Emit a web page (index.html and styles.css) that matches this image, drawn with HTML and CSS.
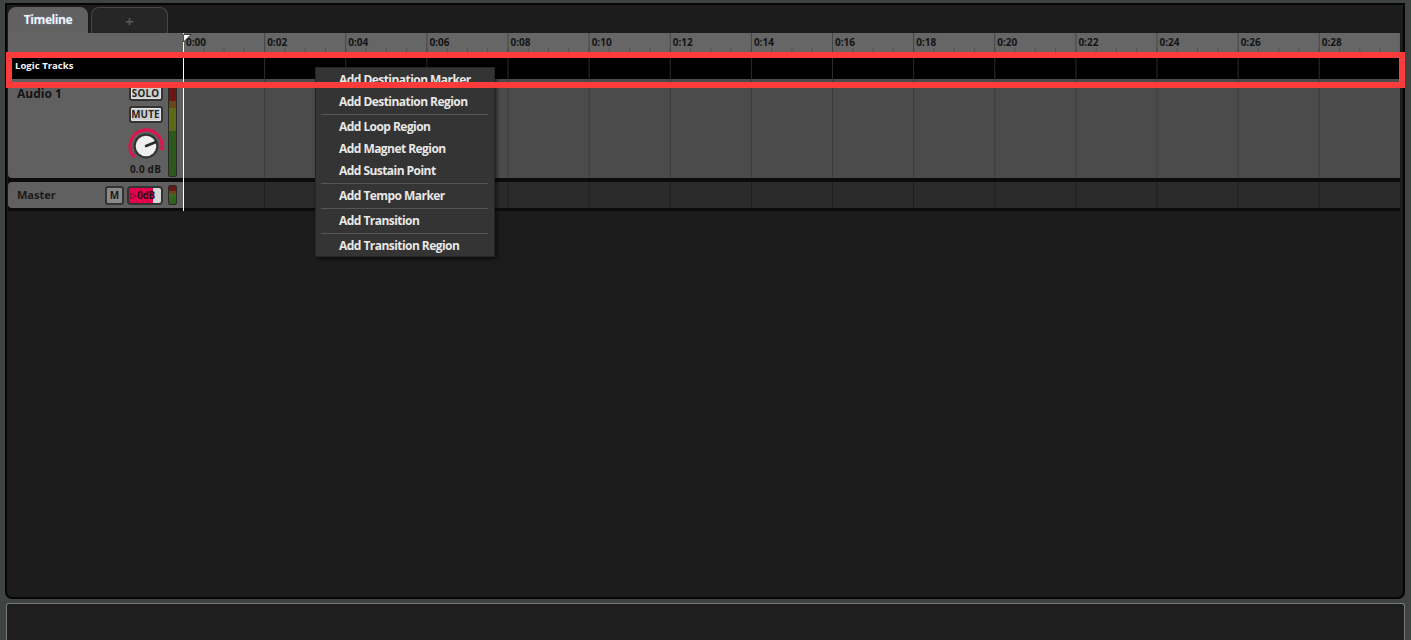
FILE: index.html
```html
<!DOCTYPE html>
<html>
<head>
<meta charset="utf-8">
<link rel="stylesheet" href="styles.css">
</head>
<body>
<div class="frame">
  <div class="panel">
    <div class="tabs">
      <div class="tab tab-active">Timeline</div>
      <div class="tab tab-add">+</div>
    </div>
    <div class="timeline">
      <div class="row ruler-row">
        <div class="hdr ruler-hdr"></div>
        <div class="ruler">
          <span class="tlabel">0:00</span><span class="tlabel">0:02</span><span class="tlabel">0:04</span><span class="tlabel">0:06</span><span class="tlabel">0:08</span><span class="tlabel">0:10</span><span class="tlabel">0:12</span><span class="tlabel">0:14</span><span class="tlabel">0:16</span><span class="tlabel">0:18</span><span class="tlabel">0:20</span><span class="tlabel">0:22</span><span class="tlabel">0:24</span><span class="tlabel">0:26</span><span class="tlabel">0:28</span>
        </div>
      </div>
      <div class="row logic-row">
        <div class="hdr logic-hdr">Logic Tracks</div>
        <div class="lane logic-lane"></div>
      </div>
      <div class="row audio-row">
        <div class="hdr track-hdr audio-hdr">
          <div class="tname">Audio 1</div>
          <div class="controls">
            <div class="btn btn-wide">SOLO</div>
            <div class="btn btn-wide btn-mute">MUTE</div>
            <svg class="knob" width="36" height="36" viewBox="0 0 36 36">
              <path d="M6.7 29.3 A16 16 0 1 1 33.5 21.9" fill="none" stroke="#e0134f" stroke-width="3"/>
              <circle cx="18" cy="18" r="12.5" fill="#333333"/>
              <circle cx="18" cy="18" r="10.3" fill="#efefef"/>
              <line x1="18" y1="18" x2="28" y2="14" stroke="#2a2a2a" stroke-width="2.6" stroke-linecap="round"/>
            </svg>
            <div class="db">0.0 dB</div>
          </div>
          <div class="meter meter-tall"></div>
        </div>
        <div class="lane audio-lane"></div>
      </div>
      <div class="row master-row">
        <div class="hdr track-hdr master-hdr">
          <div class="tname tname-master">Master</div>
          <div class="btn btn-m">M</div>
          <div class="pill"><span class="pill-tri">▷</span>0dB</div>
          <div class="meter meter-short"></div>
        </div>
        <div class="lane master-lane"></div>
      </div>
      <div class="playhead">
        <svg class="flag" width="9" height="9" viewBox="0 0 9 9"><path d="M0.5 0.5 H8 L0.5 8 Z" fill="#ffffff" stroke="#222" stroke-width="0.8"/></svg>
      </div>
    </div>
  </div>
  <div class="bottom-panel"></div>
</div>

<div class="menu">
  <div class="mitem">Add Destination Marker</div>
  <div class="mitem">Add Destination Region</div>
  <div class="msep"></div>
  <div class="mitem">Add Loop Region</div>
  <div class="mitem">Add Magnet Region</div>
  <div class="mitem">Add Sustain Point</div>
  <div class="msep"></div>
  <div class="mitem">Add Tempo Marker</div>
  <div class="msep"></div>
  <div class="mitem">Add Transition</div>
  <div class="msep"></div>
  <div class="mitem">Add Transition Region</div>
</div>

<div class="highlight"></div>
</body>
</html>
```

FILE: styles.css
```css
* { box-sizing: border-box; }
html, body {
  margin: 0;
  padding: 0;
  width: 1411px;
  height: 640px;
  overflow: hidden;
  background: #3f4342;
  font-family: "Open Sans", "DejaVu Sans", sans-serif;
}
.frame {
  position: relative;
  width: 1411px;
  height: 640px;
  display: flex;
  flex-direction: column;
  padding-top: 3px;
}
.panel {
  margin: 0 6px 0 5px;
  height: 596px;
  background: #1c1c1c;
  border: 2px solid #050505;
  border-radius: 0 0 7px 7px;
  padding: 2px 3px 0 1px;
}
.tabs {
  display: flex;
  height: 26px;
  gap: 3px;
}
.tab {
  height: 26px;
  border-radius: 8px 8px 0 0;
  display: flex;
  align-items: center;
  justify-content: center;
  font-weight: 700;
  font-size: 12px;
}
.tab-active {
  width: 80px;
  background: #616161;
  color: #f2f2f2;
  letter-spacing: -0.4px;
  text-shadow: 0 0 2px rgba(120,170,255,0.6);
  padding-bottom: 2px;
}
.tab-add {
  width: 77px;
  background: #262626;
  border: 1px solid #474747;
  border-bottom: none;
  color: #585858;
  font-size: 15px;
}
.timeline {
  position: relative;
  width: 1392px;
  display: flex;
  flex-direction: column;
  background: #0c0c0c;
  padding-bottom: 3px;
}
.row {
  display: flex;
}
.hdr {
  width: 175px;
  flex: none;
}
.lane {
  flex: 1;
}
.ruler-row { height: 19px; }
.ruler-hdr { background: #646464; }
.ruler {
  flex: 1;
  display: flex;
  background-color: #666666;
  background-image:
    linear-gradient(to right, #454545 1px, transparent 1px),
    linear-gradient(to right, #505050 1px, transparent 1px);
  background-size: 81.14px 100%, 20.285px 4px;
  background-repeat: repeat-x, repeat-x;
  background-position: 0 0, 0 100%;
}
.tlabel {
  width: 81.14px;
  flex: none;
  padding-left: 3px;
  font-weight: 700;
  font-size: 10px;
  line-height: 19px;
  color: #141414;
}
.logic-row {
  height: 27px;
  background: #000;
}
.logic-hdr {
  color: #f4f4f4;
  font-weight: 700;
  font-size: 9.6px;
  padding: 7px 0 0 7px;
}
.logic-lane {
  background-color: #000;
  background-image: linear-gradient(to right, #2c2c2c 1px, transparent 1px);
  background-size: 81.14px 100%;
}
.audio-row { height: 99px; margin-bottom: 4px; }
.master-row { height: 26px; }
.track-hdr {
  background: #606060;
  border-radius: 0 0 0 4px;
  display: flex;
}
.audio-hdr {
  align-items: flex-start;
  padding: 0 6px 0 9px;
}
.tname {
  flex: 1;
  font-weight: 700;
  font-size: 12px;
  color: #141414;
  padding-top: 6px;
}
.controls {
  width: 35px;
  display: flex;
  flex-direction: column;
  align-items: center;
  padding-top: 6px;
}
.btn {
  background: #cfcfcf;
  border: 2px solid #333;
  border-radius: 3px;
  color: #262626;
  font-weight: 700;
  font-size: 9.8px;
  display: flex;
  align-items: center;
  justify-content: center;
  box-shadow: inset 0 0 0 1px #e4e4e4;
}
.btn-wide {
  width: 34px;
  height: 16px;
  letter-spacing: 0.2px;
}
.btn-mute { margin-top: 5px; height: 17px; }
.knob { margin-top: 5px; display: block; }
.db {
  font-weight: 700;
  font-size: 10px;
  color: #161616;
  line-height: 11px;
  letter-spacing: 0.2px;
}
.meter {
  width: 9px;
  margin-left: 5px;
  border: 1px solid #2a2a2a;
  border-radius: 2px;
}
.meter-tall {
  height: 94px;
  margin-top: 4px;
  background: linear-gradient(to bottom, #6a1616 0, #6a1616 17px, #6a4518 17px, #6a4518 24px, #5a6a1a 24px, #5a6a1a 47px, #2d5a1c 47px, #2d5a1c 100%);
}
.audio-lane {
  background-color: #4b4b4b;
  background-image: linear-gradient(to right, #3b3b3b 1px, transparent 1px);
  background-size: 81.14px 100%;
}
.master-hdr {
  align-items: center;
  padding: 0 6px 0 9px;
  border-radius: 4px 0 0 4px;
}
.tname-master {
  font-size: 11px;
  padding-top: 0;
  padding-bottom: 1px;
  color: #1a1a1a;
}
.btn-m {
  width: 19px;
  height: 19px;
  font-size: 10px;
  background: #8a8a8a;
  border: 2px solid #333;
  box-shadow: none;
  color: #1a1a1a;
  margin-right: 3px;
}
.pill {
  width: 36px;
  height: 19px;
  border: 2px solid #333;
  border-radius: 4px;
  background: linear-gradient(to right, #e6004c 0, #e6004c 76%, #d8d8d8 76%);
  font-weight: 700;
  font-size: 10px;
  color: #2a1018;
  display: flex;
  align-items: center;
  padding-left: 1px;
  letter-spacing: -0.2px;
  white-space: nowrap;
  overflow: hidden;
}
.pill-tri {
  font-family: "DejaVu Sans", sans-serif;
  font-size: 8px;
  margin-right: 1px;
}
.meter-short {
  height: 20px;
  background: linear-gradient(to bottom, #6a1616 0, #6a1616 5px, #6a4518 5px, #6a4518 8px, #3d6a1c 8px, #2d5a1c 100%);
}
.master-lane {
  background-color: #2a2a2a;
  background-image: linear-gradient(to right, #1e1e1e 1px, transparent 1px);
  background-size: 81.14px 100%;
}
.playhead {
  position: absolute;
  left: 175px;
  top: 0;
  width: 1px;
  height: 178px;
  background: #ffffff;
}
.flag {
  position: absolute;
  left: 0;
  top: 1px;
  display: block;
}
.bottom-panel {
  margin: 4px 6px 0 6px;
  flex: 1;
  background: #1e1e1e;
  border: 1px solid #7a7a7a;
  border-bottom: none;
  border-radius: 3px 3px 0 0;
}
.menu {
  position: absolute;
  left: 315px;
  top: 67px;
  width: 180px;
  height: 190px;
  background: #343434;
  border: 1px solid #262626;
  box-shadow: 2px 2px 4px rgba(0,0,0,0.55);
  padding-top: 1px;
}
.mitem {
  height: 22px;
  line-height: 22px;
  padding-left: 23px;
  font-weight: 700;
  font-size: 12px;
  letter-spacing: -0.55px;
  color: #e8e8e8;
  white-space: nowrap;
}
.msep {
  height: 1px;
  background: #565656;
  margin: 1px 6px 1px 5px;
}
.highlight {
  position: absolute;
  left: 6px;
  top: 52px;
  width: 1399px;
  height: 36px;
  border: 6px solid #fc3b3b;
}
```
